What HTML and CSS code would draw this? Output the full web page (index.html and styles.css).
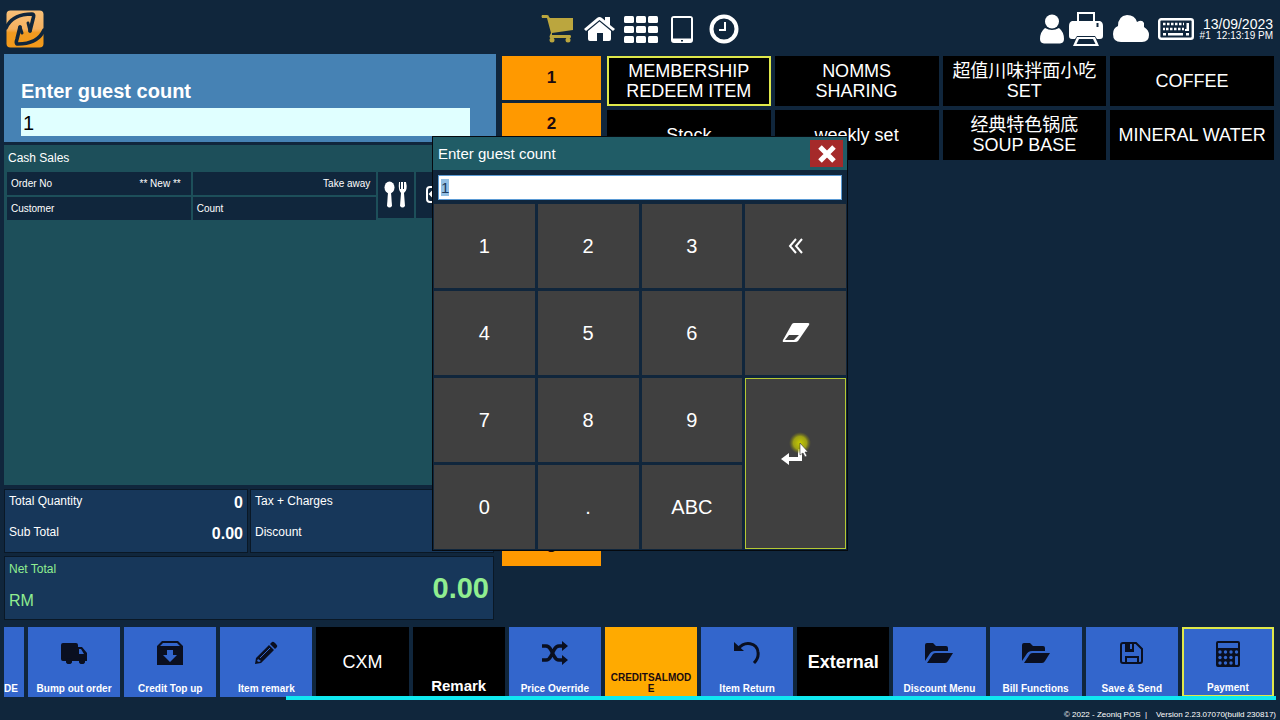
FILE: index.html
```html
<!DOCTYPE html>
<html lang="en">
<head>
  <meta charset="UTF-8" />
  <meta name="viewport" content="width=device-width, initial-scale=1.0"/>
  <title>Zeoniq POS</title>
  <link rel="stylesheet" href="styles.css">
</head>
<body>

<header class="top-bar">
  <svg class="logo" viewBox="0 0 38 38">
    <defs>
      <linearGradient id="logoFill" x1="0" y1="0" x2="0" y2="1">
        <stop offset="0" stop-color="#f8c078"/>
        <stop offset="0.5" stop-color="#f4b060"/>
        <stop offset="0.6" stop-color="#f09a20"/>
        <stop offset="1" stop-color="#f49a1a"/>
      </linearGradient>
    </defs>
    <rect x="0.500" y="0.500" width="37" height="37" rx="4" fill="url(#logoFill)"/>
    <g fill="none" stroke="#10263c" stroke-width="3.600" stroke-linecap="round" stroke-linejoin="round">
      <path d="M0 18C4 9 13 4 26 4C28 4 28 6 27 9L24 21"/>
      <path d="M38 20C34 29 25 34 12 34C10 34 10 32 11 29L14 17"/>
      <path d="M14 17L16 23M24 21L22 13" stroke-width="3"/>
    </g>
  </svg>

  <nav class="top-nav">
    <button class="icon-btn cart" aria-label="Cart">
      <svg width="34" height="28" viewBox="0 0 34 28" fill="currentColor">
        <path d="M1 0h5q2 0 2 2l1 1h23v12l-21 3v2h18q1 0 1 1.500t-1 1.500H9q-1-1 0-3l1-2L6 3H1q-1-2 0-3z"/>
        <circle cx="11" cy="25" r="2.500"/><circle cx="27" cy="25" r="2.500"/>
      </svg>
    </button>
    <button class="icon-btn" aria-label="Home">
      <svg width="31" height="26" viewBox="0 0 31 26" fill="currentColor">
        <path d="M15.500 5.500L27 15v8q0 2-2 2h-6v-8h-6v8H6q-2 0-2-2v-8z"/>
        <path d="M0 13L13 2q2.500-2 5 0l3 2.500V1h5v8l5 4-2 2L15.500 4 2 15z"/>
      </svg>
    </button>
    <button class="icon-btn" aria-label="Tables">
      <svg width="34" height="27" viewBox="0 0 34 27" fill="currentColor">
        <rect width="10" height="7" rx="1.500"/><rect x="12" width="10" height="7" rx="1.500"/><rect x="24" width="10" height="7" rx="1.500"/>
        <rect y="10" width="10" height="7" rx="1.500"/><rect x="12" y="10" width="10" height="7" rx="1.500"/><rect x="24" y="10" width="10" height="7" rx="1.500"/>
        <rect y="20" width="10" height="7" rx="1.500"/><rect x="12" y="20" width="10" height="7" rx="1.500"/><rect x="24" y="20" width="10" height="7" rx="1.500"/>
      </svg>
    </button>
    <button class="icon-btn tablet" aria-label="Tablet">
      <svg width="22" height="27" viewBox="0 0 22 27">
        <path fill="currentColor" fill-rule="evenodd" d="M3 0h16q3 0 3 3v21q0 3-3 3H3q-3 0-3-3V3q0-3 3-3zM2 2v20.500h18V2zM10 24h2v1.500h-2z"/>
      </svg>
    </button>
    <button class="icon-btn clock" aria-label="History">
      <svg width="30" height="30" viewBox="0 0 30 30" fill="none" stroke="currentColor">
        <circle cx="15" cy="15" r="12.500" stroke-width="4"/>
        <path d="M16 8v8H10" stroke-width="2"/>
      </svg>
    </button>
  </nav>

  <div class="status">
    <svg width="26" height="30" viewBox="0 0 26 30" fill="#fff">
      <circle cx="13" cy="7.500" r="7"/>
      <path d="M6 14q7 4 14 0q5 4 5 11q0 4-4 4.500H5Q1 29 1 25Q1 18 6 14z"/>
    </svg>
    <svg class="printer" width="34" height="34" viewBox="0 0 34 34" fill="#fff">
      <path fill-rule="evenodd" d="M8 0h18v9H8zM10 2v7h14V2z"/>
      <path fill-rule="evenodd" d="M3 9h28q3 1 3 5v10q0 3-3 3h-3l-2-3H8l-2 3H3q-3 0-3-3V14Q0 10 3 9zM27.500 11v4h2v-4z"/>
      <path fill-rule="evenodd" d="M8 25h18l4 9H4zM10 27l-2.500 5h19L24 27z"/>
    </svg>
    <svg class="cloud" width="36" height="28" viewBox="0 0 36 28" fill="#fff">
      <path d="M8 27q-8 0-8-8q0-6 5-8Q5 1 14 0q8 0 10 7q5-3 7 1l0 4q5 3 5 8q0 7-7 7z"/>
    </svg>
    <svg class="keyboard" width="36" height="22" viewBox="0 0 36 22">
      <rect x="1.200" y="1.200" width="33.600" height="19.600" rx="2" fill="none" stroke="#fff" stroke-width="2.400"/>
      <path d="M5 6h21M8 11h18M5 11h2" fill="none" stroke="#fff" stroke-width="2.600" stroke-dasharray="2.500 1.500"/>
      <path d="M28.500 5H31v8h-4v-2h1.500zM5 15h3v2.600H5zM10 15h15v2.600H10zM28 15h3v2.600h-3z" fill="#fff"/>
    </svg>
    <div class="date-time">
      <div class="date">13/09/2023</div>
      <div class="time">#1 &nbsp;12:13:19 PM</div>
    </div>
  </div>
</header>

<main class="main">
  <section class="order-panel">
    <div class="prompt">
      <label for="promptInput">Enter guest count</label>
      <input id="promptInput" type="text" value="1">
    </div>

    <div class="sales">
      <h2 class="sales-title">Cash Sales</h2>
      <div class="order-info">
        <div class="info-grid">
          <div class="cell"><span>Order No</span><span class="new-tag">** New **</span></div>
          <div class="cell end"><span>Take away</span></div>
          <div class="cell"><span>Customer</span></div>
          <div class="cell"><span>Count</span></div>
        </div>
        <button class="mini-btn" aria-label="Dining mode">
          <svg width="24" height="28" viewBox="0 0 24 28" fill="#fff">
            <ellipse cx="5.500" cy="6.500" rx="5" ry="6"/>
            <path d="M4 11h3l1 14q-2.500 3-5 0z"/>
            <path d="M14 1h2v7h1V1h2v7h1V1h2q2 8-2 11l1 13q-2.500 3-5 0l1-13q-3-3-2-11z"/>
          </svg>
        </button>
        <button class="mini-btn" aria-label="Add customer">
          <svg width="16" height="18" viewBox="0 0 16 18" fill="none" stroke="#fff" stroke-width="2">
            <rect x="1" y="1" width="14" height="15" rx="3"/><path d="M4 8h9M8 4L4 8l4 4"/>
          </svg>
        </button>
      </div>
    </div>

    <div class="totals">
      <dl class="total-box">
        <div><dt>Total Quantity</dt><dd>0</dd></div>
        <div><dt>Sub Total</dt><dd>0.00</dd></div>
      </dl>
      <dl class="total-box">
        <div><dt>Tax + Charges</dt><dd></dd></div>
        <div><dt>Discount</dt><dd></dd></div>
      </dl>
    </div>

    <div class="net-total">
      <div class="net-label"><span>Net Total</span><span class="currency">RM</span></div>
      <strong class="net-value">0.00</strong>
    </div>
  </section>

  <nav class="pages">
    <button>1</button>
    <button>2</button>
    <button>3</button>
    <button>4</button>
    <button>5</button>
    <button>6</button>
    <button>7</button>
    <button>8</button>
    <button>9</button>
    <button>0</button>
    <button>g</button>
  </nav>

  <section class="categories">
    <button class="active">MEMBERSHIP REDEEM ITEM</button>
    <button>NOMMS SHARING</button>
    <button>超值川味拌面小吃 SET</button>
    <button>COFFEE</button>
    <button>Stock</button>
    <button>weekly set</button>
    <button>经典特色锅底 SOUP BASE</button>
    <button>MINERAL WATER</button>
  </section>
</main>

<nav class="toolbar">
  <button class="tool cut"><span>DE</span></button>
  <button class="tool">
    <svg width="28" height="24" viewBox="0 0 28 24">
      <path d="M3 2h13q2 0 2 2v2h4l5 6v8h-2a3 3 0 0 1-6 0h-7a3 3 0 0 1-6 0H3q-2 0-2-2V4q0-2 2-2zM19 8v5h5l-3-5z" fill-rule="evenodd"/>
      <circle cx="9" cy="20" r="3"/><circle cx="22" cy="20" r="3"/>
    </svg>
    <span>Bump out order</span>
  </button>
  <button class="tool">
    <svg width="28" height="24" viewBox="0 0 28 24">
      <path d="M6 0h16l5 5v19H1V5zM7 2L4 5h20l-3-3zM11 9v5H7l7 7 7-7h-4V9z" fill-rule="evenodd"/>
    </svg>
    <span>Credit Top up</span>
  </button>
  <button class="tool">
    <svg width="24" height="24" viewBox="0 0 24 24">
      <path d="M15 4l5 5L7 22l-6 1 1-6zM4 18l-1 2 2 1 2-1z" fill-rule="evenodd"/>
      <path d="M16 3l2-2q1-1 3 1l1 1q2 2 1 3l-2 2z"/>
      <path d="M6 17L16 7" stroke="#3366cc"/>
    </svg>
    <span>Item remark</span>
  </button>
  <button class="tool black">CXM</button>
  <button class="tool black low">Remark</button>
  <button class="tool">
    <svg width="28" height="24" viewBox="0 0 28 24">
      <path d="M1 5h4q3 0 5 4l3 6q2 4 5 4h4M1 19h4q3 0 5-4l3-6q2-4 5-4h4" fill="none" stroke="#0a0f20" stroke-width="3.500"/>
      <path d="M21 0l6 5-6 5zM21 14l6 5-6 5z"/>
    </svg>
    <span>Price Override</span>
  </button>
  <button class="tool amber"><span>CREDITSALMODE</span></button>
  <button class="tool">
    <svg width="28" height="24" viewBox="0 0 28 24">
      <path d="M5 8C12-1 24 2 25 11q1 6-4 11" fill="none" stroke="#0a0f20" stroke-width="3"/>
      <path d="M1 1l10 9H1z"/>
    </svg>
    <span>Item Return</span>
  </button>
  <button class="tool black bold">External</button>
  <button class="tool">
    <svg width="28" height="24" viewBox="0 0 28 24">
      <path d="M0 20V4q0-2 2-2h6l3 3h10q2 0 2 2v3H10q-4 0-6 4z"/>
      <path d="M2 22l6-9q1-1 3-1h17l-5 8q-1 2-3 2z"/>
    </svg>
    <span>Discount Menu</span>
  </button>
  <button class="tool">
    <svg width="28" height="24" viewBox="0 0 28 24">
      <path d="M0 20V4q0-2 2-2h6l3 3h10q2 0 2 2v3H10q-4 0-6 4z"/>
      <path d="M2 22l6-9q1-1 3-1h17l-5 8q-1 2-3 2z"/>
    </svg>
    <span>Bill Functions</span>
  </button>
  <button class="tool">
    <svg width="24" height="24" viewBox="0 0 24 24">
      <path d="M3 2h13l6 6v12q0 2-2 2H3q-2 0-2-2V4q0-2 2-2z" fill="none" stroke="#0a0f20" stroke-width="2"/>
      <path d="M5 2h9v9H5zM10 3v5h2V3z" fill-rule="evenodd"/>
      <path d="M6 22v-6h12v6" fill="none" stroke="#0a0f20" stroke-width="2"/>
    </svg>
    <span>Save &amp; Send</span>
  </button>
  <button class="tool selected">
    <svg width="24" height="26" viewBox="0 0 24 26">
      <path fill-rule="evenodd" d="M2 0h20q2 0 2 2v22q0 2-2 2H2q-2 0-2-2V2q0-2 2-2zM2 2v5h20V2z"/>
      <g fill="#3366cc">
        <circle cx="4" cy="11" r="1.700"/><circle cx="9.500" cy="11" r="1.700"/><circle cx="15" cy="11" r="1.700"/><circle cx="20.500" cy="11" r="1.700"/>
        <circle cx="4" cy="16.500" r="1.700"/><circle cx="9.500" cy="16.500" r="1.700"/><circle cx="15" cy="16.500" r="1.700"/>
        <circle cx="4" cy="22" r="1.700"/><circle cx="9.500" cy="22" r="1.700"/><circle cx="15" cy="22" r="1.700"/>
        <rect x="19" y="15" width="3" height="9" rx="1"/>
      </g>
    </svg>
    <span>Payment</span>
  </button>
</nav>
<div class="scroll-track"><div class="scroll-thumb"></div></div>

<footer class="footer">© 2022 - Zeoniq POS &nbsp;|&nbsp;&nbsp;&nbsp; Version 2.23.07070(build 230817)</footer>

<div class="dialog" role="dialog" aria-labelledby="dialogTitle">
  <div class="dialog-head">
    <label id="dialogTitle" for="guestCount">Enter guest count</label>
    <button class="close" aria-label="Close">
      <svg width="20" height="20" viewBox="0 0 20 20">
        <path d="M3 3l14 14M17 3L3 17" stroke="#fff" stroke-width="5"/>
      </svg>
    </button>
  </div>
  <div class="dialog-input">
    <input id="guestCount" type="text" value="1">
  </div>
  <div class="keypad">
    <button>1</button>
    <button>2</button>
    <button>3</button>
    <button aria-label="Backspace">
      <svg width="16" height="16" viewBox="0 0 16 16" fill="none" stroke="#fff" stroke-width="2">
        <path d="M8 1L2 8l6 7M14 1L8 8l6 7"/>
      </svg>
    </button>
    <button>4</button>
    <button>5</button>
    <button>6</button>
    <button aria-label="Clear">
      <svg width="28" height="20" viewBox="0 0 28 20">
        <path fill="#fff" fill-rule="evenodd" d="M12 0h14q2 0 1 2L16 18q-1 1-3 1H2q-2 0-1-2L10 1q1-1 2-1zM7 12l-4 5h9l5-5z"/>
      </svg>
    </button>
    <button>7</button>
    <button>8</button>
    <button>9</button>
    <button class="enter" aria-label="Enter">
      <svg width="22" height="16" viewBox="0 0 22 16" fill="#fff">
        <path d="M0 10l8-6v4h9V0h4v12H8v4z"/>
      </svg>
      <svg class="pointer" width="28" height="28" viewBox="0 0 28 28">
        <defs>
          <radialGradient id="glow">
            <stop offset="0" stop-color="#c8cc00"/>
            <stop offset="0.600" stop-color="#b4b80a" stop-opacity="0.800"/>
            <stop offset="1" stop-color="#808010" stop-opacity="0"/>
          </radialGradient>
        </defs>
        <circle cx="11" cy="11" r="11" fill="url(#glow)"/>
        <path d="M11 11v12l3-2 2 4 2-1-2-4h3z" fill="#fff" stroke="#333" stroke-width="0.600"/>
      </svg>
    </button>
    <button>0</button>
    <button>.</button>
    <button>ABC</button>
  </div>
</div>

<script>
  // the value starts selected so the first key replaces it
  const guestCount = document.getElementById("guestCount");
  guestCount.focus();
  guestCount.select();
</script>

</body>
</html>
```
FILE: styles.css
```css
* {
  box-sizing: border-box;
}
body {
  margin: 0;
  height: 100vh;
  display: flex;
  flex-direction: column;
  overflow: hidden;
  background: #10263c;
  color: #fff;
  font-family: "Liberation Sans", "Noto Sans CJK SC", sans-serif;
  font-size: 12px;
}
button, input {
  font-family: inherit;
  border: none;
  border-radius: 0;
  padding: 0;
  color: #fff;
}
button {
  cursor: pointer;
}
svg {
  display: block;
  flex: none;
}

/* top bar */
.top-bar {
  flex: none;
  height: 54px;
  display: grid;
  grid-template-columns: 1fr auto 1fr;
  align-items: center;
  padding: 4px 7px 0 6px;
}
.logo {
  width: 38px;
  height: 38px;
}
.top-nav, .status {
  display: flex;
  align-items: center;
}
.top-nav {
  gap: 9px;
}
.icon-btn {
  background: none;
}
.icon-btn.cart {
  color: #bba63e;
}
.icon-btn.tablet {
  margin-left: 4px;
}
.icon-btn.clock {
  margin-left: 7px;
}
.status {
  justify-content: flex-end;
}
.printer {
  margin: 0 10px 0 4px;
}
.keyboard {
  margin: 0 6px 0 9px;
}
.date-time {
  text-align: right;
}
.date {
  font-size: 14px;
  line-height: 14px;
}
.time {
  font-size: 10px;
  line-height: 10px;
}

/* main area */
.main {
  flex: 1;
  min-height: 0;
  display: grid;
  grid-template-columns: 492fr 99fr 667fr;
  gap: 6px;
  padding: 0 6px 7px 4px;
}
.order-panel {
  display: flex;
  flex-direction: column;
  min-width: 0;
}
.prompt {
  display: flex;
  flex-direction: column;
  gap: 5px;
  padding: 25px 26px 6px 17px;
  background: #4682b4;
}
.prompt label {
  font-size: 20px;
  line-height: 24px;
  font-weight: bold;
}
.prompt input {
  width: 100%;
  height: 28px;
  padding: 2px 2px 0;
  background: #e0ffff;
  color: #000;
  font-size: 20px;
}
.sales {
  flex: 1;
  margin-top: 3px;
  padding: 0 3px;
  background: #1d4f5a;
}
.sales-title {
  margin: 0;
  padding-left: 1px;
  font-size: 12px;
  line-height: 27px;
  font-weight: normal;
}
.order-info {
  display: flex;
  gap: 2px;
}
.info-grid {
  flex: none;
  width: 76%;
  display: grid;
  grid-template-columns: 1fr 1fr;
  gap: 2px;
}
.cell {
  display: flex;
  justify-content: space-between;
  padding: 0 6px 0 4px;
  background: #10263c;
  font-size: 10px;
  line-height: 23px;
}
.cell.end {
  justify-content: flex-end;
}
.new-tag {
  padding-right: 4px;
}
.mini-btn {
  width: 36px;
  height: 46px;
  display: flex;
  align-items: center;
  justify-content: center;
  background: #10263c;
}

.totals {
  display: flex;
  gap: 2px;
  margin: 4px 2px 0 0;
}
.total-box {
  flex: 1;
  margin: 0;
  height: 64px;
  padding: 0 4px;
  background: #17375a;
  border: 1px solid #0a1826;
}
.total-box div {
  display: flex;
  justify-content: space-between;
  height: 31px;
}
.total-box dt {
  line-height: 22px;
}
.total-box dd {
  margin: 0;
  font-size: 16px;
  line-height: 26px;
  font-weight: bold;
}
.net-total {
  display: flex;
  justify-content: space-between;
  align-items: center;
  height: 64px;
  margin: 3px 2px 0 0;
  padding: 0 4px;
  background: #17375a;
  border: 1px solid #0a1826;
  color: #90ee90;
}
.net-label {
  display: flex;
  flex-direction: column;
  gap: 16px;
  padding-bottom: 4px;
}
.currency {
  font-size: 16px;
}
.net-value {
  font-size: 29px;
}

.pages {
  display: flex;
  flex-direction: column;
  gap: 3px;
  height: 512px;
  padding-top: 2px;
}
.pages button {
  flex: 1;
  background: #ff9900;
  color: #1a0a10;
  font-size: 17px;
  font-weight: bold;
}
.categories {
  display: grid;
  grid-template-columns: repeat(4, 1fr);
  grid-auto-rows: 50px;
  gap: 4px;
  padding-top: 2px;
  align-content: start;
}
.categories button {
  padding: 0 4px;
  background: #000;
  font-size: 18px;
  line-height: 20px;
}
.categories button.active {
  padding: 0 16px;
  border: 2px solid #dfe84a;
}
.categories button:nth-child(2) {
  padding: 0 30px;
}

/* bottom toolbar */
.toolbar {
  flex: none;
  height: 70px;
  display: grid;
  grid-template-columns: 20px repeat(13, 1fr);
  gap: 4px;
  padding: 0 6px 0 4px;
}
.tool {
  min-width: 0;
  display: flex;
  flex-direction: column;
  align-items: center;
  justify-content: space-between;
  padding: 14px 4px 3px;
  background: #3366cc;
  font-size: 10px;
  line-height: 11px;
  font-weight: bold;
  overflow-wrap: anywhere;
  fill: #0a0f20;
}
.tool.cut {
  justify-content: flex-end;
  align-items: flex-start;
  padding-left: 0;
}
.tool.black {
  justify-content: center;
  padding: 0;
  background: #000;
  font-size: 18px;
  font-weight: normal;
}
.tool.black.low {
  justify-content: flex-end;
  padding-bottom: 6px;
  font-size: 15px;
  font-weight: bold;
}
.tool.black.bold {
  font-weight: bold;
}
.tool.amber {
  justify-content: flex-end;
  background: #ffaa00;
  color: #1a0a10;
}
.tool.selected {
  padding: 12px 2px 2px;
  border: 2px solid #dfe84a;
}
.scroll-track {
  flex: none;
  margin: -1px 4px 0 0;
}
.scroll-thumb {
  height: 4px;
  margin-left: 286px;
  background: #10e8f0;
}
.footer {
  flex: none;
  height: 20px;
  padding: 10px 4px 0 0;
  font-size: 8px;
  line-height: 10px;
  text-align: right;
}

/* keypad dialog */
.dialog {
  position: absolute;
  top: 136px;
  left: 50%;
  width: 416px;
  transform: translateX(-50%);
  padding-bottom: 1px;
  background: #10263c;
  border: 1px solid #05090e;
}
.dialog-head {
  display: flex;
  justify-content: space-between;
  align-items: center;
  height: 33px;
  padding: 0 4px 0 5px;
  background: #205c66;
  font-size: 15px;
}
.close {
  width: 33px;
  height: 27px;
  display: flex;
  align-items: center;
  justify-content: center;
  background: #a52a2a;
}
.dialog-input {
  padding: 5px 5px 4px;
}
.dialog-input input {
  display: block;
  width: 100%;
  height: 25px;
  padding: 0 2px;
  background: #fff;
  border: 1px solid #5b9bd5;
  outline: none;
  color: #000;
  font-size: 15px;
}
.dialog-input input::selection {
  background: #92bfe4;
  color: #1d3a5c;
}
.keypad {
  display: grid;
  grid-template-columns: repeat(4, 1fr);
  grid-auto-rows: 84px;
  gap: 3px;
  padding: 0 1px;
}
.keypad button {
  display: flex;
  align-items: center;
  justify-content: center;
  background: #404040;
  font-size: 20px;
}
.keypad .enter {
  position: relative;
  grid-row: span 2;
  padding: 0 7px 13px 0;
  border: 1px solid #b5c933;
}
.pointer {
  position: absolute;
  left: 43px;
  top: 53px;
}
```
